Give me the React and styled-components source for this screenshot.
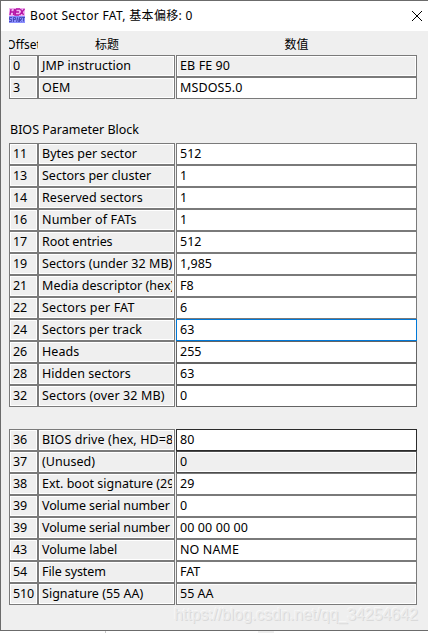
import React from "react";
import styled, { createGlobalStyle } from "styled-components";

const Global = createGlobalStyle`
  * { box-sizing: border-box; }
  body { margin: 0; background: #fff; overflow: hidden; }
`;

const Screen = styled.div`
  position: relative;
  width: 428px;
  height: 633px;
  background: #fff;
  color: #000;
  font: 12.5px/20px "Noto Sans", "Noto Sans CJK SC", sans-serif;
  white-space: pre;
`;

const Dialog = styled.main`
  display: flex;
  flex-direction: column;
  height: 631px;
  border: solid #6b6b6b;
  border-width: 1px 0 1px 1px;
  background: #efefef;
`;

const TitleBar = styled.header`
  display: flex;
  align-items: center;
  height: 30px;
  padding: 0 5px 0 8px;
  background: #fff;
`;

const Title = styled.h1`
  flex: 1;
  margin: 0 0 0 5px;
  font-size: 12px;
  font-weight: 400;
  letter-spacing: ${(p) => p.$spacing}px;
`;

const CloseButton = styled.button`
  display: flex;
  padding: 0;
  border: 0;
  background: none;
`;

const Content = styled.div`
  width: 408px;
  margin-left: 8px;
`;

const HeaderRow = styled.div`
  display: grid;
  grid-template-columns: 29px 138px 241px;
  height: 24px;
  padding-top: 4px;
`;

const HeaderCell = styled.div`
  display: flex;
  justify-content: center;
  overflow: hidden;
  font-size: 12px;
`;

const Section = styled.section`
  display: flex;
  flex-direction: column;
  padding-top: ${(p) => p.$gap || 0}px;
`;

const SectionTitle = styled.h2`
  height: 22px;
  margin: 0 0 0 1px;
  font-size: 12.5px;
  line-height: 18px;
  font-weight: 400;
`;

const Row = styled.div`
  display: grid;
  grid-template-columns: 29px 138px 241px;
`;

const borders = { focus: "#0078d7", dark: "#2b2b2b", mid: "#4d4d4d", soft: "#646464" };

const Cell = styled.div`
  height: 22px;
  min-width: 0;
  margin-right: ${(p) => (p.$label ? 1 : 0)}px;
  padding: 0 2px 0 1px;
  border: 1px solid ${(p) => borders[p.$edge] || "#7a7a7a"};
  box-shadow: inset 0 0 0 1px #fff;
  background: ${(p) => (p.$editable ? "#fff" : "#efefef")};
`;

const CellText = styled.div`
  height: 20px;
  padding-left: 2px;
  overflow: hidden;
  letter-spacing: ${(p) => p.$spacing}px;
`;

const Watermark = styled.div`
  position: absolute;
  left: 174px;
  top: 605px;
  font: 15.9px/20px "Liberation Sans", sans-serif;
  color: #ececec;
  text-shadow: 1px 1px 0 #dadada, -1px -1px 0 #f7f7f7;
`;

const Footer = styled.footer`
  display: flex;
  height: 2px;
  padding-left: 105px;
`;

const FooterTick = styled.div`
  width: 1px;
  height: 2px;
  background: #c8c8c8;
`;

const FooterMark = styled.div`
  width: 16px;
  height: 2px;
  margin-left: 152px;
  background: #efefef;
`;

const boot = [
  { offset: "0", label: "JMP instruction", tracking: 0, value: "EB FE 90", readonly: true },
  { offset: "3", label: "OEM", tracking: 0.2, value: "MSDOS5.0" },
];

const bios = [
  { offset: "11", label: "Bytes per sector", tracking: 0.01, value: "512" },
  { offset: "13", label: "Sectors per cluster", tracking: 0, value: "1" },
  { offset: "14", label: "Reserved sectors", tracking: 0.07, value: "1" },
  { offset: "16", label: "Number of FATs", tracking: 0.14, value: "1" },
  { offset: "17", label: "Root entries", tracking: -0.07, value: "512" },
  { offset: "19", label: "Sectors (under 32 MB)", tracking: 0.04, value: "1,985" },
  { offset: "21", label: "Media descriptor (hex)", tracking: 0.04, value: "F8" },
  { offset: "22", label: "Sectors per FAT", tracking: 0.18, value: "6" },
  { offset: "24", label: "Sectors per track", tracking: 0.08, value: "63", edge: "focus" },
  { offset: "26", label: "Heads", tracking: 0.06, value: "255", edge: "soft" },
  { offset: "28", label: "Hidden sectors", tracking: 0.05, value: "63", edge: "soft" },
  { offset: "32", label: "Sectors (over 32 MB)", tracking: 0.13, value: "0", edge: "soft" },
];

const volume = [
  { offset: "36", label: "BIOS drive (hex, HD=8", tracking: 0.1, value: "80", edge: "dark" },
  { offset: "37", label: "(Unused)", tracking: 0.03, value: "0", edge: "mid", readonly: true },
  { offset: "38", label: "Ext. boot signature (29", tracking: 0, value: "29" },
  { offset: "39", label: "Volume serial number", tracking: -0.1, value: "0" },
  { id: "serial-hex", offset: "39", label: "Volume serial number", tracking: -0.1, value: "00 00 00 00" },
  { offset: "43", label: "Volume label", tracking: -0.07, value: "NO NAME" },
  { offset: "54", label: "File system", tracking: -0.1, value: "FAT" },
  { offset: "510", label: "Signature (55 AA)", tracking: 0.02, value: "55 AA", readonly: true },
];

function Rows({ items }) {
  return items.map((item) => (
    <Row key={item.id || item.offset}>
      <Cell><CellText $spacing={-0.1}>{item.offset}</CellText></Cell>
      <Cell $label><CellText $spacing={item.tracking}>{item.label}</CellText></Cell>
      <Cell $editable={!item.readonly} $edge={item.edge}>
        <CellText $spacing={item.value.length > 6 ? 0.1 : 0}>{item.value}</CellText>
      </Cell>
    </Row>
  ));
}

function HexIcon() {
  return (
    <svg width="16" height="16" viewBox="0 0 16 16">
      <path d="M0 0h16v8H0z" fill="#f0b4f0" />
      <path d="M0 8h16v7H0z" fill="#8c90ff" />
      <path d="M2 1 1 7M5.500 1 4.500 7M1.500 4h3.500M7 1 6 7h4M7 1h4M6.500 4h3.500M11.500 1l3 6M15.500 1l-5 6" stroke="#b414a4" strokeWidth="1.400" fill="none" />
      <path d="M3 9.500H.5v2h2v2H0M4.500 14V9.500h2v2h-2M7.500 14l1-4.500 1 4.500M10.500 14V9.500h2v2h-2l2 2M13 9.500h3M14.500 9.500v4" stroke="#3c3ca8" strokeWidth=".8" fill="none" />
    </svg>
  );
}

export default function App() {
  return (
    <Screen>
      <Global />
      <Dialog>
        <TitleBar>
          <HexIcon />
          <Title $spacing={0.33}>Boot Sector FAT, 基本偏移: 0</Title>
          <CloseButton aria-label="Close">
            <svg width="12" height="12" viewBox="0 0 12 12">
              <path d="M1 1l10 10M11 1 1 11" stroke="#000" strokeWidth="1" />
            </svg>
          </CloseButton>
        </TitleBar>
        <Content>
          <HeaderRow>
            <HeaderCell>Offset</HeaderCell>
            <HeaderCell>标题</HeaderCell>
            <HeaderCell>数值</HeaderCell>
          </HeaderRow>
          <Section>
            <Rows items={boot} />
          </Section>
          <Section $gap={22}>
            <SectionTitle>BIOS Parameter Block</SectionTitle>
            <Rows items={bios} />
          </Section>
          <Section $gap={22}>
            <Rows items={volume} />
          </Section>
        </Content>
      </Dialog>
      <Footer>
        <FooterTick />
        <FooterMark />
      </Footer>
      <Watermark>https://blog.csdn.net/qq_34254642</Watermark>
    </Screen>
  );
}
